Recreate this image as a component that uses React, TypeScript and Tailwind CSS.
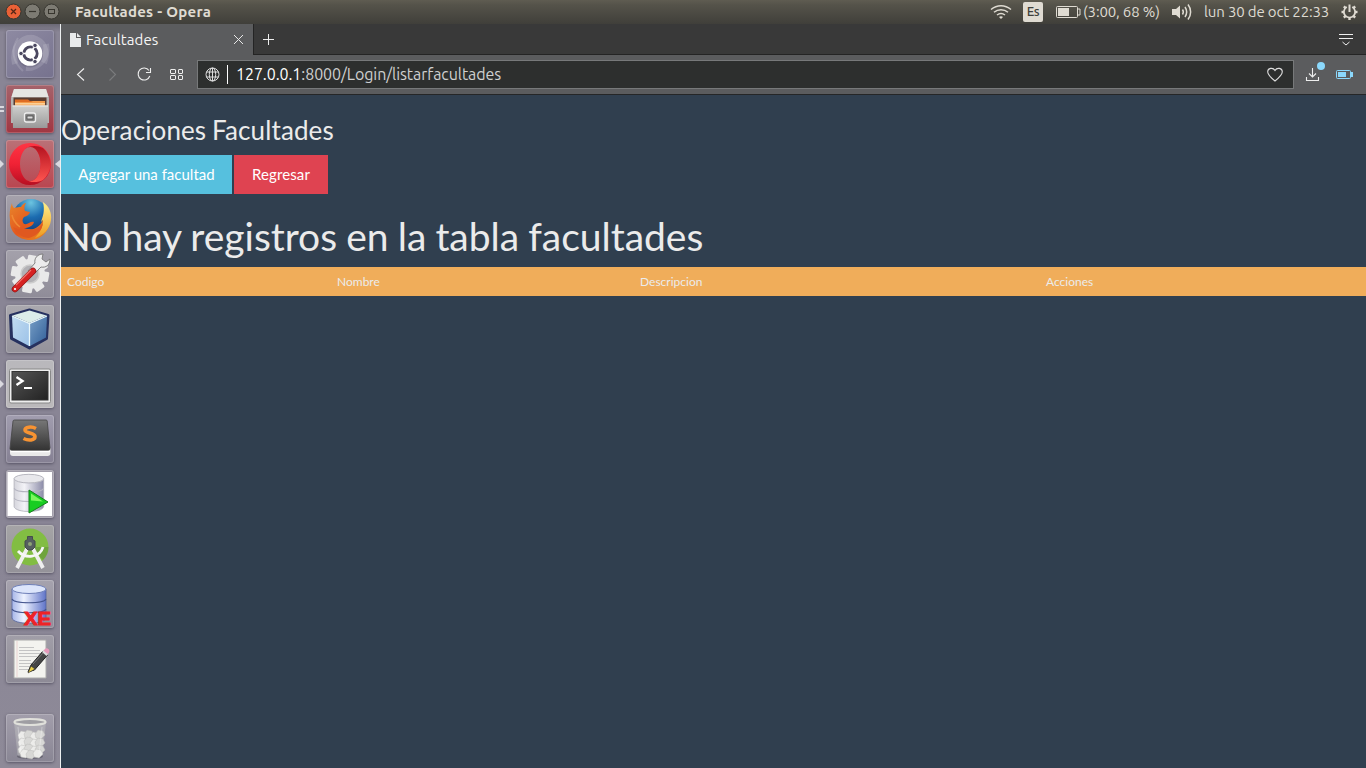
import React from "react";

type Kids = { children?: React.ReactNode };

const Ico = ({ children }: Kids) => (
  <svg width="48" height="48" viewBox="0 0 48 48" className="block">
    {children}
  </svg>
);

const Ubuntu = () => (
  <Ico>
    <g fill="none" stroke="#fff" strokeOpacity=".14" strokeWidth="6">
      <path d="M9 34C5 16 18 4 30 9c11 5 11 17 8 24" />
      <path d="M40 14c3 16-10 25-20 24" />
      <path d="M12 8c-8 12-5 24 5 33" strokeWidth="2" />
    </g>
    <circle cx="24" cy="24.500" r="13" fill="#55526a" opacity=".3" />
    <circle cx="24" cy="23.500" r="12.300" fill="#fff" />
    <circle cx="24.500" cy="23.500" r="6.600" fill="none" stroke="#4b4860" strokeWidth="3" />
    <path d="M24.500 23.500H14M24.500 23.500l5 9M24.500 23.500l5-9" stroke="#fff" strokeWidth="1.600" />
    <circle cx="24.500" cy="23.500" r="5" fill="#fff" />
    <g fill="#4b4860" stroke="#fff" strokeWidth=".8">
      <circle cx="15" cy="23.500" r="2.200" />
      <circle cx="29" cy="15.400" r="2.200" />
      <circle cx="29" cy="31.600" r="2.200" />
    </g>
  </Ico>
);

const Files = () => (
  <Ico>
    <defs>
      <linearGradient id="cab" x1="0" y1="0" x2="0" y2="1">
        <stop offset="0" stopColor="#d0d0ce" />
        <stop offset="1" stopColor="#999" />
      </linearGradient>
    </defs>
    <path d="M8 4h32l3 9v25H5V13z" fill="#b5b3b2" />
    <path d="M8 4h32l2.500 8h-37z" fill="#e5e5e2" />
    <path d="M7.500 12.500h33V22h-33z" fill="#5b3c30" />
    <path d="M9 14.500h13l2 1.500h15v7H9z" fill="#df6d24" />
    <path d="M9 17h16l2-1h12v7H9z" fill="#f39b4b" />
    <path d="M9 18.800h30" stroke="#ffe0ae" strokeWidth="1.200" />
    <path d="M6.500 20.500h35.500l-.5 22.500H7z" fill="url(#cab)" />
    <path d="M6.500 21h35.500" stroke="#eee" />
    <rect x="18.500" y="28" width="11" height="9" rx="2" fill="#858585" stroke="#eee" strokeWidth="1.300" />
    <rect x="21" y="31" width="6" height="3" fill="#ddd" stroke="#444" strokeWidth=".8" />
  </Ico>
);

const Opera = () => (
  <Ico>
    <defs>
      <linearGradient id="opa" x1="0" y1="0" x2="0" y2="1">
        <stop offset="0" stopColor="#ff3544" />
        <stop offset=".5" stopColor="#f02235" />
        <stop offset="1" stopColor="#b80f22" />
      </linearGradient>
      <linearGradient id="opb" x1="0" y1="0" x2="0" y2="1">
        <stop offset="0" stopColor="#b3121f" />
        <stop offset="1" stopColor="#ff5550" />
      </linearGradient>
    </defs>
    <path fillRule="evenodd" d="M24 3a21 21 0 100 42 21 21 0 000-42zM24.300 7c5.700 0 10.300 7.500 10.300 17s-4.600 17-10.300 17S14 33.500 14 24 18.600 7 24.300 7z" fill="url(#opa)" />
    <path d="M18 9.500C24 5 31 5 37 8a21 21 0 010 32c-6 3-13 3-19-1.500 2 1.700 4 2.500 6.300 2.500 5.700 0 10.300-7.500 10.300-17S30 7 24.300 7c-2.300 0-4.300.8-6.300 2.500z" fill="url(#opb)" />
  </Ico>
);

const Firefox = () => (
  <Ico>
    <defs>
      <radialGradient id="ffb" cx=".5" cy=".1" r=".8">
        <stop offset="0" stopColor="#6cc4e0" />
        <stop offset=".5" stopColor="#1c6cb0" />
        <stop offset="1" stopColor="#113d7d" />
      </radialGradient>
      <linearGradient id="ffo" x1="0" y1="0" x2="1" y2="1">
        <stop offset="0" stopColor="#e7862b" />
        <stop offset=".5" stopColor="#e4581e" />
        <stop offset="1" stopColor="#e9901f" />
      </linearGradient>
      <linearGradient id="fft" x1="0" y1="0" x2="0" y2="1">
        <stop offset="0" stopColor="#fff08a" />
        <stop offset="1" stopColor="#ee9a20" />
      </linearGradient>
    </defs>
    <circle cx="25" cy="22.500" r="18.500" fill="url(#ffb)" />
    <path d="M6 8c0 3 1 4 2 5 3-1 5-1 7-1 1-2 3-4 5-4-2 3-2 6-1 8l5 1c-1 3-3 4-6 5-2 2-2 5 0 7 4 1 6-3 10-2-1 4-6 6-10 6 9 4 18-1 20-12l3-1c1 3 3 5 3 7-2 11-10 18-20 18C12 45 3 36 4 25c-1-6 0-12 2-17z" fill="url(#ffo)" />
    <path d="M37 7c6 4 9 11 8 18-1 9-8 16-16 18 5-6 8-10 8-18l-2 2c2-6 4-11 2-20z" fill="url(#fft)" />
    <path d="M20 34c6 2 13 0 17-6-1 8-7 13-14 15-7 0-13-5-16-11 4 2 8 3 13 2z" fill="#df5820" />
    <path d="M6 20c1 5 4 9 8 12" stroke="#f08a35" strokeWidth="1.500" fill="none" />
  </Ico>
);

const teeth = [0, 45, 90, 135, 180, 225, 270, 315];
const Settings = () => (
  <Ico>
    <g fill="#e9e9e9">
      {teeth.map((a) => (
        <rect key={a} x="19" y="5" width="10" height="10" rx="1.500" transform={`rotate(${a + 10} 24 24)`} />
      ))}
      <circle cx="24" cy="24" r="15" />
    </g>
    <circle cx="24" cy="24" r="9" fill="#b2b1b5" stroke="#ccc" strokeWidth="1.500" />
    <path d="M27 25l8-8c5 1 9-2 9-8l-4 3-4-3 1-5c-6 0-9 5-8 9l-7 8z" fill="#ececec" stroke="#777" strokeWidth=".9" />
    <path d="M9 39l18-18" stroke="#941414" strokeWidth="6.500" strokeLinecap="round" />
    <path d="M9 39l18-18" stroke="#d62121" strokeWidth="5" strokeLinecap="round" />
    <path d="M10 35l15-15" stroke="#f0706a" strokeWidth="1.200" />
    <circle cx="9" cy="39" r="1.100" fill="#fff" />
  </Ico>
);

const Cube = () => (
  <Ico>
    <defs>
      <linearGradient id="cl" x1="0" y1="0" x2="1" y2="1">
        <stop offset="0" stopColor="#c2dcf1" />
        <stop offset="1" stopColor="#9cc2e8" />
      </linearGradient>
      <linearGradient id="cr" x1="0" y1="0" x2="1" y2="1">
        <stop offset="0" stopColor="#789fc6" />
        <stop offset="1" stopColor="#315f99" />
      </linearGradient>
    </defs>
    <path d="M23.500 5L42 10.500l-1.500 23L23.500 43 5.500 33.500 4.500 10.500z" fill="#26315f" stroke="#26315f" strokeWidth="3" strokeLinejoin="round" />
    <path d="M23.500 5.500l17 5-17 7.500-17-7.500z" fill="#dcede9" />
    <path d="M6 11l17 7v23L7 32.500z" fill="url(#cl)" />
    <path d="M41 11l-17 7v23l16-8.500z" fill="url(#cr)" />
    <path d="M6 11l17.500 7.500L41 11M23.500 18v23" fill="none" stroke="#e9f7fa" strokeWidth="1.300" />
  </Ico>
);

const Terminal = () => (
  <Ico>
    <defs>
      <linearGradient id="tg" x1="0" y1="0" x2="1" y2="1">
        <stop offset="0" stopColor="#555" />
        <stop offset="1" stopColor="#222" />
      </linearGradient>
    </defs>
    <rect x="3.500" y="9" width="41" height="34" rx="1.500" fill="#eee" stroke="#888" />
    <rect x="6" y="11.500" width="36" height="28.500" fill="url(#tg)" stroke="#333" />
    <path d="M10.500 17l6 4-6 4" fill="none" stroke="#fff" strokeWidth="2.400" />
    <path d="M18 28h8" stroke="#fff" strokeWidth="2" />
  </Ico>
);

const Sublime = () => (
  <Ico>
    <defs>
      <linearGradient id="sg" x1="0" y1="0" x2="0" y2="1">
        <stop offset="0" stopColor="#777" />
        <stop offset="1" stopColor="#333" />
      </linearGradient>
    </defs>
    <path d="M4 33h40.500v5q0 3-3 3h-34.500q-3 0-3-3z" fill="#e9e9e9" />
    <path d="M8.500 5h31.500q1 0 1.200 1L44 33.500q0 2-2 2H6q-2 0-2-2L7 6q.3-1 1.500-1z" fill="url(#sg)" stroke="#444" strokeWidth=".8" />
    <path d="M4.500 36.500h39.500" stroke="#fff" strokeWidth="1.500" />
    <path d="M30 13.500c-4.500-2.500-11-1.500-11 1.500 0 3.500 10 2.500 10 6.500s-6.500 4.500-11.500 2" fill="none" stroke="#f79332" strokeWidth="3.600" />
  </Ico>
);

const Cylinder = ({ blue = false }: { blue?: boolean }) => (
  <g>
    <defs>
      <linearGradient id={blue ? "db2" : "db1"}>
        <stop offset="0" stopColor={blue ? "#a7b6e8" : "#d5d5dc"} />
        <stop offset=".35" stopColor={blue ? "#edf2ff" : "#f3f3f7"} />
        <stop offset="1" stopColor={blue ? "#6074c8" : "#8b8ba8"} />
      </linearGradient>
    </defs>
    <path d="M7 9v29c1 7 33 7 34 0V9z" fill={blue ? "url(#db2)" : "url(#db1)"} stroke={blue ? "#53639d" : "#aaaab4"} strokeWidth=".8" />
    <path d="M7 19c2 5 32 5 34 0M7 29c2 5 32 5 34 0" fill="none" stroke={blue ? "#44558e" : "#b4b4c0"} strokeWidth="1.100" />
    <ellipse cx="24" cy="9" rx="17" ry="4.500" fill={blue ? "#dce5fb" : "#e8e8ec"} stroke={blue ? "#6e7fb8" : "#b2b2bb"} />
  </g>
);

const SqlDeveloper = () => (
  <Ico>
    <rect x="1.500" y="2" width="44.500" height="44" fill="#fff" />
    <g transform="translate(2 0) scale(.87 .96)">
      <Cylinder />
    </g>
    <path d="M23 20l19 12-19 11z" fill="#18cd22" stroke="#15811b" />
    <path d="M25 23.500l12 8-12-1z" fill="#7cf75e" />
  </Ico>
);

const OracleXE = () => (
  <Ico>
    <g transform="translate(-1 0)">
      <Cylinder blue />
    </g>
    <text x="18" y="44.500" fontSize="18" fontWeight="bold" fontFamily="Liberation Sans, sans-serif" fill="#ee2326" stroke="#ee2326" strokeWidth="1" textLength="27" lengthAdjust="spacingAndGlyphs">XE</text>
  </Ico>
);

const AndroidStudio = () => (
  <Ico>
    <circle cx="24" cy="22" r="18.500" fill="#82bd43" />
    <path d="M24 22l13 13A18.500 18.500 0 0042.500 22z" fill="#5c8c38" opacity=".5" />
    <path d="M22 22L11 43M26 22l11 21" stroke="#efefef" strokeWidth="3.800" />
    <path d="M12 26c7 8 22 7 25-4" stroke="#f7f7f7" strokeWidth="2.800" fill="none" />
    <path d="M21.500 11.500h5v3l2.500 1.500v6l-3 3h-4l-3-3v-6l2.500-1.500z" fill="#555e60" stroke="#454b4d" />
    <circle cx="24" cy="19" r="2" fill="#8da276" />
  </Ico>
);

const Gedit = () => (
  <Ico>
    <path d="M8 5h32v38H8z" fill="#f3f3ef" stroke="#aaa" />
    <path d="M11 6v36" stroke="#e6c5c5" strokeWidth=".7" />
    <path d="M13 12.500h15M13 15.500h21M13 18.500h21M13 21.500h18M13 25.500h12M13 28.500h15M13 31.500h13M13 34.500h10" stroke="#c4c4c4" />
    <path d="M22 37l3-7L37 16l4.500 4-13 15z" fill="#454545" stroke="#222" />
    <path d="M25 31l4 3-7 4z" fill="#ead047" stroke="#333" strokeWidth=".6" />
    <path d="M27 29L38 17" stroke="#777" />
    <path d="M36 17l2-2.500 4.500 4-2 2.500z" fill="#ddd" />
    <path d="M37.500 15.500l1.500-1.500c2-2 5.500 1 4 3.500l-1.500 1.500z" fill="#e79abb" />
  </Ico>
);

const paper = [[16, 21], [22, 20], [28, 22], [33, 20], [16, 28], [22, 27], [28, 29], [33, 28], [16, 35], [22, 34], [28, 36], [33, 35], [18, 39], [24, 40], [31, 39]];
const Trash = () => (
  <Ico>
    <ellipse cx="24" cy="42.500" rx="13" ry="2.500" fill="#4a4856" opacity=".5" />
    <path d="M8.500 8l3.500 33c4 3 20 3 24 0l3.500-33z" fill="#c6c6c7" opacity=".45" stroke="#c2c2c2" />
    {paper.map(([x, y], i) => (
      <path key={i} d={`M${x - 4} ${y}l3-4 5 1 2 4-4 4-5-1z`} fill={i % 2 ? "#d8d8d6" : "#ececea"} stroke="#bdbdbb" strokeWidth=".5" />
    ))}
    <ellipse cx="24" cy="8" rx="15.500" ry="3" fill="#9f9ea3" stroke="#e0e0db" strokeWidth="2.200" />
    <path d="M12 13l3 27M36 13l-3 27" stroke="#fff" strokeOpacity=".3" />
  </Ico>
);

const apps = [
  { icon: <Ubuntu />, bg: "bg-[linear-gradient(145deg,#8e8aa2,#76728e)]" },
  { icon: <Files />, bg: "bg-[linear-gradient(#a5636b,#a13642)]", left: "=" },
  { icon: <Opera />, bg: "bg-[linear-gradient(#ba7177,#b94650)]", left: ">", right: true },
  { icon: <Firefox />, bg: "bg-[linear-gradient(#a5a1ab,#8b8794)]" },
  { icon: <Settings />, bg: "bg-[linear-gradient(#a4a1ab,#8f8c98)]" },
  { icon: <Cube />, bg: "bg-[linear-gradient(#aaa8ae,#94929b)]" },
  { icon: <Terminal />, bg: "bg-[linear-gradient(#b9b8bc,#bbb9bb)]", left: ">" },
  { icon: <Sublime />, bg: "bg-[linear-gradient(#a19daf,#858093)]" },
  { icon: <SqlDeveloper />, bg: "bg-[#a29eaa]" },
  { icon: <AndroidStudio />, bg: "bg-[linear-gradient(#a5a4a6,#949299)]" },
  { icon: <OracleXE />, bg: "bg-[linear-gradient(#a6a3ae,#908d99)]" },
  { icon: <Gedit />, bg: "bg-[linear-gradient(#a19ea8,#8d8a96)]" },
];

const Tile = ({ bg, children }: Kids & { bg: string }) => (
  <div className={`h-12 w-12 shrink-0 overflow-hidden rounded-[3px] shadow-[inset_0_0_0_1px_rgba(255,255,255,0.18),0_1px_3px_rgba(40,35,55,0.5)] ${bg}`}>{children}</div>
);

const Launcher = () => (
  <aside className="flex w-[61px] shrink-0 flex-col border-r border-[#edf0f1] bg-[linear-gradient(#6b6975,#898595_8px,#898595_70%,#8e8a98)] pt-1.5">
    <div className="flex flex-col gap-[7px]">
      {apps.map((a, i) => (
        <div key={i} className="flex h-12 items-center">
          <span className="flex w-1.5 shrink-0">
            {a.left && (
              <svg width="5" height="8" viewBox="0 0 5 8" fill="#dad9df">
                <path d={a.left === "=" ? "M0 1h4v2H0zM0 5h4v2H0z" : "M0 0l4 4-4 4z"} />
              </svg>
            )}
          </span>
          <Tile bg={a.bg}>{a.icon}</Tile>
          {a.right && (
            <svg className="ml-auto" width="5" height="8" viewBox="0 0 5 8" fill="#dad9df">
              <path d="M5 0v8L0 4z" />
            </svg>
          )}
        </div>
      ))}
    </div>
    <div className="mt-[31px] pl-1.5">
      <Tile bg="bg-[linear-gradient(#a29eab,#898694)]"><Trash /></Tile>
    </div>
  </aside>
);

const WindowButtons = () => (
  <svg width="64" height="24" viewBox="0 0 64 24" className="shrink-0">
    <circle cx="13.500" cy="11.500" r="7.500" fill="#ea6136" stroke="#373630" />
    <path d="M11 9l5 5M16 9l-5 5" stroke="#542616" strokeWidth="1.300" />
    <circle cx="32.500" cy="11.500" r="7.500" fill="#7d7b73" stroke="#373630" />
    <path d="M29 11.500h7" stroke="#37352e" strokeWidth="1.200" />
    <circle cx="51.500" cy="11.500" r="7.500" fill="#7d7b73" stroke="#373630" />
    <rect x="48.500" y="9.500" width="6" height="4" fill="none" stroke="#37352e" />
  </svg>
);

const TopPanel = () => (
  <header className="flex h-6 shrink-0 items-center bg-[linear-gradient(#5f5c51,#55534a_20%,#403f3a)] text-[#dfdbd2]">
    <WindowButtons />
    <span className="ml-[11px] whitespace-nowrap text-[15px] leading-6 font-bold tracking-[0.25px]">Facultades - Opera</span>
    <svg className="ml-auto" width="22" height="24" viewBox="0 0 22 24" fill="none" stroke="#dfdbd2" strokeWidth="1.500">
      <path d="M1 9.500C7 4.500 15 4.500 21 9.500M4 12.300c4-3.500 10-3.500 14 0M7 15c2.500-2 5.500-2 8 0" />
      <path d="M9 17l2 2 2-2c-1-1-3-1-4 0z" fill="#dfdbd2" stroke="none" />
    </svg>
    <span className="ml-[11px] flex h-5 w-5 items-center justify-center rounded-[2px] bg-[#dfdbd2] text-[13px] font-medium tracking-[-0.5px] text-[#403f3a]">Es</span>
    <svg className="ml-[13px]" width="25" height="24" viewBox="0 0 25 24">
      <rect x=".5" y="6.500" width="21" height="11" rx="1" fill="none" stroke="#dfdbd2" />
      <rect x="2" y="8" width="11" height="8" fill="#dfdbd2" />
      <path d="M22 9h2v6h-2" fill="none" stroke="#dfdbd2" />
    </svg>
    <span className="ml-[2px] w-[78px] whitespace-nowrap text-[15px] leading-6 tracking-[-0.15px]">(3:00, 68 %)</span>
    <svg className="ml-[10px]" width="21" height="24" viewBox="0 0 21 24" fill="none" stroke="#dfdbd2" strokeWidth="1.500">
      <path d="M1 9h4l4-3.500v13L5 15H1z" fill="#dfdbd2" stroke="none" />
      <path d="M11.500 9.500c1 1.500 1 3.500 0 5M14 7c2 3 2 7 0 10M17 4.500c3.500 4.500 3.500 10.500 0 15" />
    </svg>
    <span className="ml-[12px] w-[126px] whitespace-nowrap text-[15px] leading-6 tracking-[-0.15px]">lun 30 de oct 22:33</span>
    <svg className="mr-[8px] ml-[11px]" width="17" height="24" viewBox="0 0 17 24">
      <g transform="translate(8.500 12)" stroke="#dfdbd2" fill="none">
        {teeth.slice(1).map((a) => (
          <path key={a} d="M0-5.500V-8" strokeWidth="2.400" transform={`rotate(${a})`} />
        ))}
        <path d="M-2.700-5A5.600 5.600 0 102.700-5" strokeWidth="1.700" />
        <path d="M0-7.500V0" strokeWidth="2" />
      </g>
    </svg>
  </header>
);

const TabBar = () => (
  <div className="flex h-[31px] shrink-0 bg-[#393939]">
    <div className="flex w-48 items-center bg-[#5b5c5e] pl-2">
      <svg width="12" height="14" viewBox="0 0 12 14"><path d="M1 0h6v5h5v9H1zM8 0l4 4H8z" fill="#e8eaeb" /></svg>
      <span className="ml-[5px] text-[15px] leading-none tracking-[0.07px] text-[#f5f5f5]">Facultades</span>
      <svg className="mr-[9px] ml-auto" width="11" height="11" viewBox="0 0 11 11"><path d="M1 1l9 9M10 1l-9 9" stroke="#e8e8e8" /></svg>
    </div>
    <div className="flex flex-1 items-center border-b border-l border-[#242424]">
      <svg className="ml-2" width="13" height="13" viewBox="0 0 13 13"><path d="M6.500 1v11M1 6.500h11" stroke="#eee" /></svg>
      <svg className="mr-[13px] ml-auto" width="14" height="13" viewBox="0 0 14 13" fill="none" stroke="#eee">
        <path d="M0 1.500h14M0 5.500h14M3.500 9l3.500 3 3.500-3" />
      </svg>
    </div>
  </div>
);

const Toolbar = () => (
  <div className="flex h-10 shrink-0 items-center border-b border-[#252627] bg-[#5b5c5e]">
    <svg width="136" height="39" viewBox="61 55 136 39" fill="none" stroke="#eee" strokeWidth="1.100" className="shrink-0">
      <path d="M84 68.500l-6.500 6 6.500 6" />
      <path d="M109.500 68.500l6 6-6 6" stroke="#7b7c7e" />
      <path d="M149 70.500a6 6 0 10.800 5.500M150.500 68v4.500H146" />
      <g strokeWidth="1">
        <rect x="170.500" y="69.500" width="5" height="4" rx=".5" />
        <rect x="178.500" y="69.500" width="4" height="4" rx=".5" />
        <rect x="170.500" y="75.500" width="5" height="4" rx=".5" />
        <rect x="178.500" y="75.500" width="4" height="4" rx=".5" />
      </g>
    </svg>
    <div className="flex h-[29px] flex-1 items-center border border-[#77797a] bg-[#2d2f2e] pl-[7px]">
      <svg width="15" height="15" viewBox="0 0 15 15" fill="none" stroke="#ddd">
        <circle cx="7.500" cy="7.500" r="6.500" />
        <ellipse cx="7.500" cy="7.500" rx="3.200" ry="6.500" />
        <path d="M7.500 1v13M1.500 5h12M1.500 10h12" />
      </svg>
      <span className="ml-[7px] h-[19px] w-px bg-white" />
      <span className="ml-[8px] pb-0.5 whitespace-nowrap text-[16px] leading-6 tracking-[-0.07px] text-[#cfd0d0]"><span className="text-white">127.0.0.1</span>:8000/Login/listarfacultades</span>
      <svg className="mr-[10px] ml-auto" width="16" height="15" viewBox="0 0 16 15" fill="none" stroke="#ddd" strokeWidth="1.100">
        <path d="M8 14C3 10 .7 7.500.7 4.800.7 1 6 0 8 3.500 10 0 15.300 1 15.300 4.800 15.300 7.500 13 10 8 14z" />
      </svg>
    </div>
    <svg width="72" height="39" viewBox="1294 55 72 39" fill="none" className="shrink-0">
      <path d="M1312.500 68v9M1309 73.500l3.500 3.500 3.500-3.500M1306.500 77v3.500h12V77" stroke="#eee" strokeWidth="1.100" />
      <circle cx="1321" cy="66" r="4" fill="#8bd8fc" />
      <rect x="1336.500" y="70.500" width="14" height="8" rx="1" stroke="#8bd8fc" />
      <path d="M1338 72h8v5h-8zM1351 72h2v5h-2z" fill="#8bd8fc" />
    </svg>
  </div>
);

const Page = () => (
  <main className="flex-1 bg-[#303f4f] font-['Lato',sans-serif] text-[#ebebeb]">
    <h3 className="pt-[21px] text-[26px] leading-[29px] tracking-[0.12px] [word-spacing:-1px]">Operaciones Facultades</h3>
    <div className="mt-[10px] flex gap-0.5 text-[15px] text-white">
      <button className="h-[39px] w-[171px] bg-[#56c0de]">Agregar una facultad</button>
      <button className="h-[39px] w-[94px] bg-[#df4351] tracking-[0.1px]">Regresar</button>
    </div>
    <h1 className="mt-[21px] text-[39px] leading-[43px] tracking-[-0.02px] [word-spacing:-0.8px]">No hay registros en la tabla facultades</h1>
    <table className="mt-[9px] w-full table-fixed bg-[#f0ad5a] text-left text-[12px]">
      <thead>
        <tr className="h-[29px]">
          <th className="w-[270px] pl-1.5 font-normal">Codigo</th>
          <th className="w-[303px] pl-1.5 font-normal">Nombre</th>
          <th className="w-[406px] pl-1.5 font-normal">Descripcion</th>
          <th className="pl-1.5 font-normal">Acciones</th>
        </tr>
      </thead>
    </table>
  </main>
);

export default function App() {
  return (
    <div className="flex h-[768px] w-[1366px] flex-col overflow-hidden font-['Ubuntu','Noto_Sans',sans-serif]">
      <TopPanel />
      <div className="flex min-h-0 flex-1">
        <Launcher />
        <div className="flex min-w-0 flex-1 flex-col">
          <TabBar />
          <Toolbar />
          <Page />
        </div>
      </div>
    </div>
  );
}
